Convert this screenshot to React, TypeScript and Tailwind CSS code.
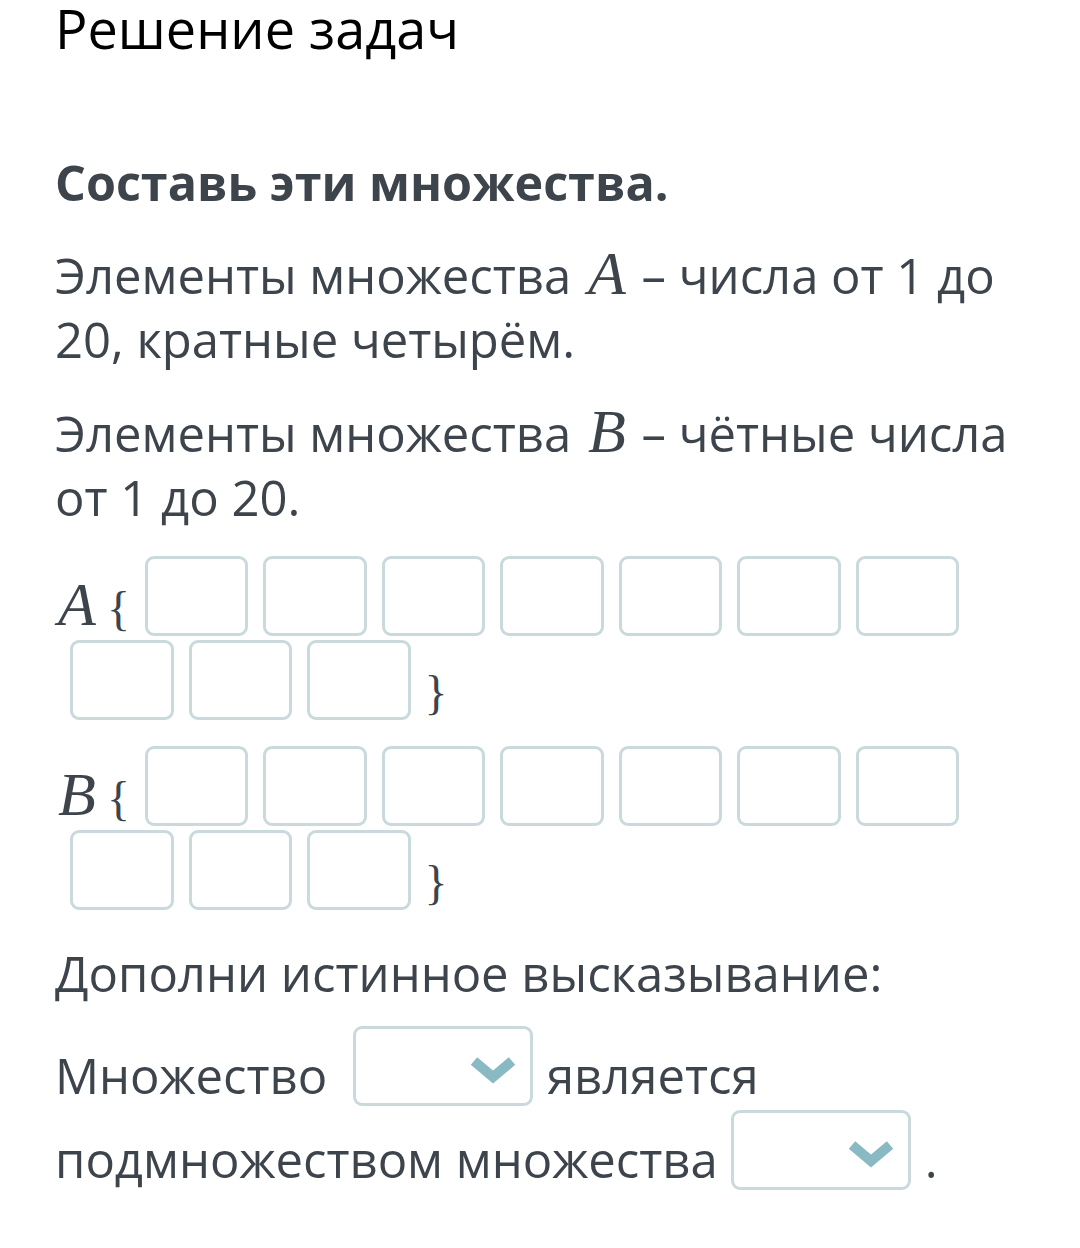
import React from 'react';

function Cell() {
  return (
    <span className="inline-block w-[103.5px] h-[80px] my-[2px] ml-[15px] align-[-13px] rounded-[9px] border-[3px] border-[#c9d9dc] bg-white" />
  );
}

function Chevron() {
  return (
    <svg width="46" height="30" viewBox="0 0 46 30" fill="none">
      <polyline points="4,4 23,20 42,4" stroke="#89b9c3" strokeWidth="10" strokeLinejoin="miter" />
    </svg>
  );
}

function Dropdown() {
  return (
    <span className="inline-block w-[180px] h-[80px] my-[2px] ml-[13px] mr-[14px] align-[-14px] overflow-hidden rounded-[9px] border-[3px] border-[#c9d9dc] bg-white">
      <span className="flex h-full items-center justify-end pr-[14px] pt-[12px]">
        <Chevron />
      </span>
    </span>
  );
}

function SetRow({ name }: { name: string }) {
  return (
    <p className="leading-[48px]">
      <span className="font-['Liberation_Serif',serif] italic text-[62px] leading-none ml-[3px]">{name}</span>
      <span className="font-['Liberation_Serif',serif] text-[48px] leading-none ml-[11px]">{'{'}</span>
      {Array.from({ length: 10 }).map((_, i) => (
        <Cell key={i} />
      ))}
      <span className="font-['Liberation_Serif',serif] text-[48px] leading-none ml-[14px]">{'}'}</span>
    </p>
  );
}

function MathVar({ name }: { name: string }) {
  return (
    <span className="font-['Liberation_Serif',serif] italic text-[62px] leading-none ml-[4px] mr-[3px]">{name}</span>
  );
}

export default function App() {
  return (
    <div className="min-h-screen bg-white px-[55px] font-['Open_Sans','Noto_Sans',sans-serif] text-[49px] leading-[64px] text-[#3d444c]">
      <h1 className="text-[54px] leading-[56px] text-black">Решение задач</h1>

      <h2 className="mt-[94px] font-bold text-[48.5px]">Составь эти множества.</h2>

      <p className="mt-[28px]">
        Элементы множества <MathVar name="A" /> – числа от 1 до 20, кратные четырём.
      </p>
      <p className="mt-[29px]">
        Элементы множества <MathVar name="B" /> – чётные числа от 1 до 20.
      </p>

      <div className="mt-[25px]">
        <SetRow name="A" />
      </div>
      <div className="mt-[22px]">
        <SetRow name="B" />
      </div>

      <p className="mt-[29px]">Дополни истинное высказывание:</p>

      <p className="mt-[19px] leading-[48px]">
        Множество <Dropdown />является подмножеством множества<Dropdown />.
      </p>
    </div>
  );
}
